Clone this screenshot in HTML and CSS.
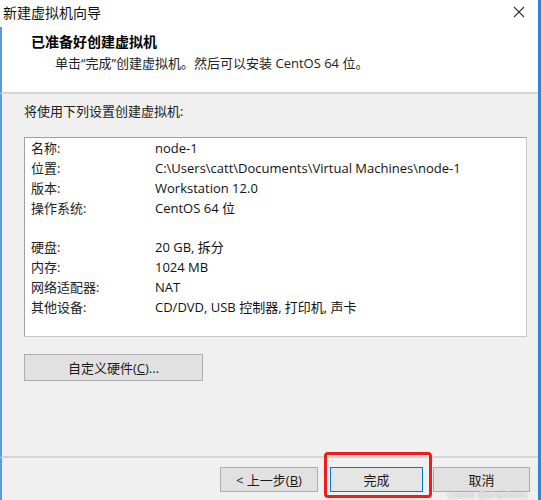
FILE: index.html
```html
<!DOCTYPE html>
<html lang="zh-CN">
<head>
  <meta charset="UTF-8" />
  <title>新建虚拟机向导</title>
  <link rel="stylesheet" href="styles.css">
</head>
<body>
  <div class="wizard">
    <div class="titlebar">
      <span class="titlebar-text">新建虚拟机向导</span>
      <svg class="close-icon" width="12" height="12" viewBox="0 0 12 12">
        <path d="M1 1 L11 11 M11 1 L1 11" stroke="#333" stroke-width="1.1" fill="none" />
      </svg>
    </div>

    <div class="header">
      <div class="header-title">已准备好创建虚拟机</div>
      <div class="header-sub">单击“完成”创建虚拟机。然后可以安装 CentOS 64 位。</div>
    </div>

    <div class="content">
      <div class="intro">将使用下列设置创建虚拟机:</div>

      <div class="summary">
        <div class="row"><span class="key">名称:</span><span class="val">node-1</span></div>
        <div class="row"><span class="key">位置:</span><span class="val">C:\Users\catt\Documents\Virtual Machines\node-1</span></div>
        <div class="row"><span class="key">版本:</span><span class="val">Workstation 12.0</span></div>
        <div class="row"><span class="key">操作系统:</span><span class="val">CentOS 64 位</span></div>
        <div class="row gap"></div>
        <div class="row"><span class="key">硬盘:</span><span class="val">20 GB, 拆分</span></div>
        <div class="row"><span class="key">内存:</span><span class="val">1024 MB</span></div>
        <div class="row"><span class="key">网络适配器:</span><span class="val">NAT</span></div>
        <div class="row"><span class="key">其他设备:</span><span class="val">CD/DVD, USB 控制器, 打印机, 声卡</span></div>
      </div>

      <button class="btn btn-custom">自定义硬件(<u>C</u>)...</button>
    </div>

    <div class="footer">
      <button class="btn btn-back">&lt; 上一步(<u>B</u>)</button>
      <div class="highlight">
        <button class="btn btn-finish">完成</button>
      </div>
      <button class="btn btn-cancel">取消</button>
      <span class="mark">CSDN @shank001</span>
    </div>
  </div>
</body>
</html>
```

FILE: styles.css
```css
* {
  box-sizing: border-box;
}

body {
  margin: 0;
  padding: 0;
  background: #f0f0f0;
  font-family: "Open Sans", "Noto Sans CJK SC", sans-serif;
  font-size: 13px;
  color: #1a1a1a;
}

.wizard {
  width: 541px;
  height: 500px;
  border-right: 3px solid #2b88d8;
  display: flex;
  flex-direction: column;
  background: #f0f0f0;
  overflow: hidden;
}

.titlebar {
  height: 27px;
  background: #fff;
  display: flex;
  align-items: center;
  justify-content: space-between;
  padding: 0 13px 4px 3px;
  flex-shrink: 0;
}

.titlebar-text {
  font-size: 14px;
  color: #111;
}

.header {
  height: 67px;
  background: #fff;
  border-left: 2px solid #5b9bd5;
  border-bottom: 2px solid #d6d6d6;
  padding: 5px 0 0 29px;
  flex-shrink: 0;
}

.header-title {
  font-weight: bold;
  font-size: 14px;
  line-height: 20px;
  color: #000;
}

.header-sub {
  padding-left: 24px;
  line-height: 20px;
  margin-top: 1px;
  color: #222;
}

.content {
  flex: 1;
  border-left: 2px solid #5b9bd5;
  border-bottom: 2px solid #d6d6d6;
  padding: 7px 11px 0 22px;
  display: flex;
  flex-direction: column;
  align-items: flex-start;
}

.intro {
  line-height: 20px;
  color: #222;
}

.summary {
  width: 503px;
  height: 200px;
  margin-top: 16px;
  background: #fff;
  border: 1px solid #a0a0a0;
  border-right-color: #c8c8c8;
  border-bottom-color: #c8c8c8;
  padding: 0 0 0 6px;
}

.row {
  display: flex;
  height: 20px;
  line-height: 20px;
}

.row.gap {
  height: 19px;
}

.key {
  width: 124px;
  color: #222;
}

.val {
  color: #111;
}

.btn {
  font-family: inherit;
  font-size: 13px;
  line-height: 16px;
  color: #1a1a1a;
  background: #e1e1e1;
  border: 1px solid #adadad;
  padding: 0;
  cursor: pointer;
}

.btn u {
  text-decoration: underline;
}

.btn-custom {
  width: 179px;
  height: 27px;
  margin-top: 17px;
}

.footer {
  height: 42px;
  flex-shrink: 0;
  border-left: 2px solid #5b9bd5;
  display: flex;
  align-items: flex-start;
  padding: 9px 0 0 218px;
  position: relative;
}

.btn-back {
  width: 98px;
  height: 25px;
}

.highlight {
  margin: -15px 0 0 6px;
  width: 108px;
  height: 46px;
  border: 3px solid #f01c1c;
  border-radius: 4px;
  padding: 12px 0 0 3px;
}

.btn-finish {
  width: 93px;
  height: 25px;
  border: 1px solid #0078d7;
  background: #e5e5e5;
}

.btn-cancel {
  width: 97px;
  height: 25px;
  margin-left: 1px;
}

/* watermark in the lower right corner */
.mark {
  position: absolute;
  right: 10px;
  bottom: 0;
  font-family: "Liberation Sans", sans-serif;
  font-size: 9.5px;
  line-height: 11px;
  color: #f4f4f4;
  text-shadow: 0 0 2px #8a8a8a;
}
```
